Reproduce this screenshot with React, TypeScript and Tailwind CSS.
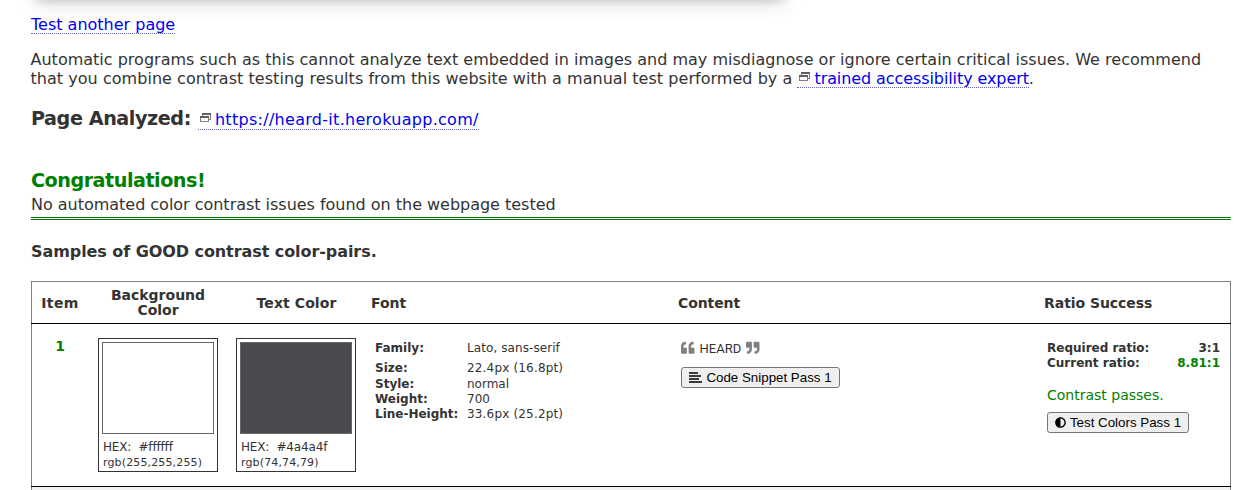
import React from "react";
import { FaQuoteLeft, FaQuoteRight, FaAdjust } from "react-icons/fa";

function ExternalIcon() {
  return (
    <svg viewBox="0 0 11 10" width="11" height="10" className="mr-[4px] ml-[2px] inline-block align-[2px]" fill="none" shapeRendering="crispEdges">
      <path d="M2.5 3V0.5H10.5V6.5H9" stroke="#808080" />
      <path d="M2 1H11" stroke="#606060" strokeWidth="2" />
      <rect x="0.5" y="3.5" width="8" height="5" fill="#fff" stroke="#808080" />
      <path d="M0 4H9" stroke="#606060" strokeWidth="2" />
    </svg>
  );
}

function Link({ children, external, className }: { children: string; external?: boolean; className: string }) {
  return (
    <a href="#" className={"inline-block border-b border-dotted border-[#6666cc] whitespace-nowrap text-[#0000ee] " + className}>
      {external && <ExternalIcon />}
      {children}
    </a>
  );
}

function Swatch({ color, hex, rgb }: { color: string; hex: string; rgb: string }) {
  return (
    <div className="h-[134px] w-[120px] border border-[#333] p-[3px] text-[12px] leading-[15px]">
      <div className={"mb-[6px] h-[92px] border border-[#666] " + color} />
      <div className="pl-px tracking-[-0.17px]">HEX: &nbsp;{hex}</div>
      <div className="pl-px text-[11px] tracking-[0.14px]">{rgb}</div>
    </div>
  );
}

const fontRows = [
  ["Family:", "Lato, sans-serif", "h-5", "tracking-[0.08px]"],
  ["Size:", "22.4px (16.8pt)", "h-4", "tracking-[0.17px]"],
  ["Style:", "normal", "h-[15px]", "tracking-normal"],
  ["Weight:", "700", "h-[15px]", "tracking-normal"],
  ["Line-Height:", "33.6px (25.2pt)", "h-[15px]", "tracking-[0.17px]"],
];

export default function App() {
  return (
    <div className="h-[490px] w-[1248px] overflow-hidden bg-white font-['DejaVu_Sans',Verdana,sans-serif] text-[16px] leading-[19px] text-[#333]">
      <div className="-mt-6 mb-1 ml-[36px] h-5 w-[748px] shadow-[0_4px_8px_0_rgba(0,0,0,0.16),0_6px_20px_0_rgba(0,0,0,0.17)]" />
      <div className="ml-[31px] w-[1200px]">
        <div className="h-[35px] pt-[14px]">
          <Link className="h-[20px] leading-[21px]">Test another page</Link>
        </div>
        <p className="-ml-[0.5px] pt-[15px] tracking-[0.006px] whitespace-nowrap">Automatic programs such as this cannot analyze text embedded in images and may misdiagnose or ignore certain critical issues. We recommend</p>
        <p className="-ml-[0.5px] h-[20px] tracking-[0.04px] whitespace-nowrap">that you combine contrast testing results from this website with a manual test performed by a <Link external className="h-[19px] leading-[19px] tracking-[-0.09px]">trained accessibility expert</Link>.</p>
        <div className="flex h-[41px] items-end gap-[7px]">
          <h2 className="h-[21px] text-[19.2px] font-bold tracking-[-0.44px]">Page Analyzed:</h2>
          <Link external className="h-[20px] leading-[19px] tracking-[0.29px]">https://heard-it.herokuapp.com/</Link>
        </div>
        <h2 className="mt-[41px] h-6 text-[19.2px] font-bold tracking-[-0.5px] text-[#008000]">Congratulations!</h2>
        <p className="h-[25px] border-b-[3px] border-double border-[#008000] tracking-[-0.02px]">No automated color contrast issues found on the webpage tested</p>
        <h3 className="pt-[22px] font-bold tracking-[-0.07px]">Samples of GOOD contrast color-pairs.</h3>
        <div className="mt-[20px] h-[220px] border border-b-0 border-[#808080] text-[12px]">
          <div className="-mx-px flex h-[42px] items-center border-b border-black pt-px text-[14px] leading-[15px] font-bold">
            <div className="w-[58px] text-center tracking-[0.4px]">Item</div>
            <div className="w-[136px] pr-4 pl-[18px] text-center">Background Color</div>
            <div className="w-[146px] pr-[3px] text-center tracking-[0.1px]">Text Color</div>
            <div className="w-[307px]">Font</div>
            <div className="w-[366px] tracking-[-0.1px]">Content</div>
            <div className="tracking-[-0.05px]">Ratio Success</div>
          </div>
          <div className="-mx-px flex h-[163px] border-b border-black pt-[14px]">
            <div className="w-[67px] pr-[9px] text-center text-[14px] leading-[17px] font-bold text-[#008000]">1</div>
            <div className="w-[138px]"><Swatch color="bg-white" hex="#ffffff" rgb="rgb(255,255,255)" /></div>
            <div className="w-[139px]"><Swatch color="bg-[#4a4a4f]" hex="#4a4a4f" rgb="rgb(74,74,79)" /></div>
            <div className="w-[306px] pt-[3px] leading-[15px]">
              {fontRows.map(([label, value, height, tracking]) => (
                <div key={label} className={"flex whitespace-nowrap " + height}>
                  <b className="w-[92px]">{label}</b>
                  <span className={tracking}>{value}</span>
                </div>
              ))}
            </div>
            <div className="w-[366px]">
              <div className="flex h-[20px] items-center gap-[5px] font-['Roboto',sans-serif] text-[13px]">
                <FaQuoteLeft className="text-[#808080]" size={13.5} />
                <span>HEARD</span>
                <FaQuoteRight className="text-[#808080]" size={13.5} />
              </div>
              <button className="mt-[9px] flex h-[21px] w-[159px] items-center justify-center gap-1 rounded-[3px] border border-[#767676] bg-[#efefef] font-['Liberation_Sans',Arial,sans-serif] text-[13.33px] whitespace-nowrap text-black">
                <svg viewBox="0 0 13 11" width="13" height="11">
                  <path d="M0 1H9M0 4H12M0 7H10M0 10H13" stroke="currentColor" strokeWidth="1.6" />
                </svg>
                Code Snippet Pass 1
              </button>
            </div>
            <div className="w-[173px] pt-[3px] leading-[15px]">
              <div className="flex justify-between font-bold"><span>Required ratio:</span><span>3:1</span></div>
              <div className="flex justify-between font-bold"><span>Current ratio:</span><span className="text-[#008000]">8.81:1</span></div>
              <p className="pt-[16px] text-[14px] leading-[17px] text-[#008000]">Contrast passes.</p>
              <button className="mt-2 flex h-[21px] w-[142px] items-center justify-center gap-1 rounded-[3px] border border-[#767676] bg-[#efefef] font-['Liberation_Sans',Arial,sans-serif] text-[13.33px] whitespace-nowrap text-black">
                <FaAdjust size={11} />Test Colors Pass 1
              </button>
            </div>
          </div>
          <div className="h-4 bg-[#f2f2f2]" />
        </div>
      </div>
    </div>
  );
}
